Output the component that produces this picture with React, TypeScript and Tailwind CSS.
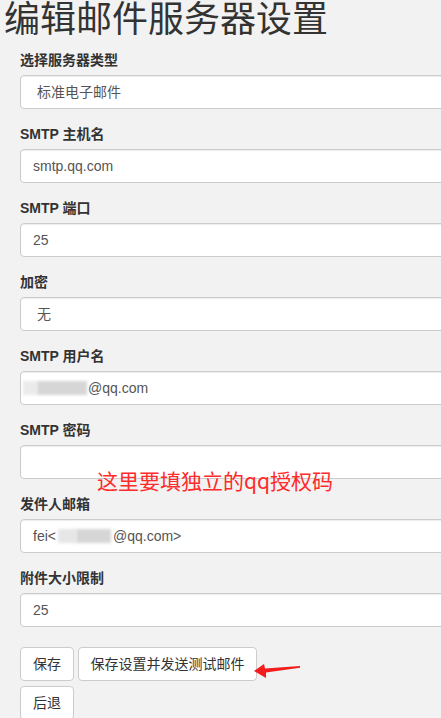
const font = { fontFamily: '"Liberation Sans", "Noto Sans CJK SC", sans-serif' };

function Field({ label, children, select }: { label: string; children?: React.ReactNode; select?: boolean }) {
  return (
    <div className="mb-[15px]">
      <label className="block text-[14px] font-bold leading-[20px] mb-[5px] text-[#333]">{label}</label>
      <div
        className={`h-[34px] w-[600px] bg-white border border-[#ccc] rounded-[4px] shadow-[inset_0_1px_1px_rgba(0,0,0,0.075)] flex items-center text-[14px] text-[#555] ${
          select ? 'pl-[16px]' : 'pl-[12px]'
        }`}
      >
        {children}
      </div>
    </div>
  );
}

function Blur({ w, className }: { w: number; className?: string }) {
  return (
    <span
      className={`inline-block h-[14px] bg-[#d6d6d6] blur-[1.5px] ${className ?? ''}`}
      style={{ width: w }}
    />
  );
}

function Btn({ children, wide }: { children: React.ReactNode; wide?: boolean }) {
  return (
    <button
      className={`h-[34px] bg-white border border-[#ccc] rounded-[4px] text-[14px] text-[#333] leading-[20px] whitespace-nowrap ${
        wide ? 'w-[179px] px-0' : 'px-[12px]'
      }`}
    >
      {children}
    </button>
  );
}

export default function App() {
  return (
    <div className="relative w-[441px] h-[718px] overflow-hidden bg-[#f2f2f2] text-[#333]" style={font}>
      <h1 className="text-[36px] leading-[40px] font-normal pl-[4px] mb-[10px] text-[#333]">编辑邮件服务器设置</h1>

      <div className="pl-[20px]">
        <Field label="选择服务器类型" select>
          标准电子邮件
        </Field>
        <Field label="SMTP 主机名">smtp.qq.com</Field>
        <Field label="SMTP 端口">25</Field>
        <Field label="加密" select>
          无
        </Field>
        <Field label="SMTP 用户名">
          <span className="-ml-[10px] flex items-center">
            <Blur w={14} className="bg-[#ebebeb]" />
            <Blur w={50} className="bg-[#d0d0d0]" />
          </span>
          <span className="ml-[1px]">@qq.com</span>
        </Field>
        <Field label="SMTP 密码" />
        <Field label="发件人邮箱">
          <span>fei&lt;</span>
          <span className="flex items-center ml-[2px]">
            <Blur w={18} className="bg-[#e6e6e6]" />
            <Blur w={35} className="bg-[#d2d2d2]" />
          </span>
          <span className="ml-[2px]">@qq.com&gt;</span>
        </Field>
        <Field label="附件大小限制">25</Field>

        <div className="pt-[5px] flex gap-[4px]">
          <Btn>保存</Btn>
          <Btn wide>保存设置并发送测试邮件</Btn>
        </div>
        <div className="mt-[5px]">
          <Btn>后退</Btn>
        </div>
      </div>

      <div
        className="absolute left-[97px] top-[466px] text-[21px] leading-[28px] text-[#ff2b2b] whitespace-nowrap"
        style={{ fontFamily: '"Noto Sans CJK SC", sans-serif' }}
      >
        这里要填独立的qq授权码
      </div>

      <svg className="absolute left-[250px] top-[660px]" width="55" height="22" viewBox="250 660 55 22">
        <polygon
          points="254,671 264,664 265,668.5 300,666 300,667.8 266,672.5 266,678"
          fill="#f21d1d"
        />
      </svg>
    </div>
  );
}
